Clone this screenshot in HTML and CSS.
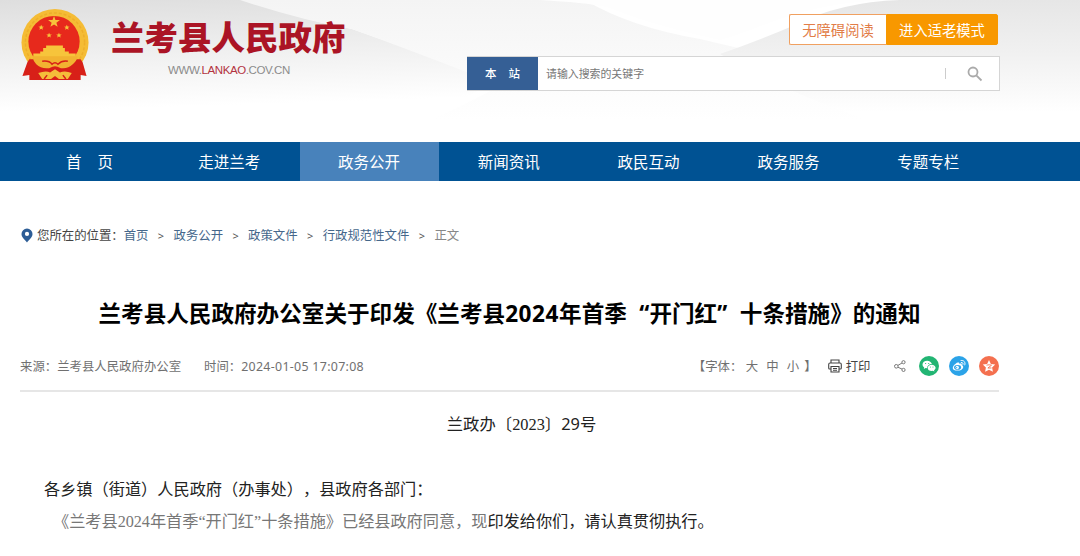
FILE: index.html
```
<!DOCTYPE html>
<html lang="zh-CN">
<head>
<meta charset="utf-8">
<title>兰考县人民政府</title>
<link rel="stylesheet" href="styles.css">
</head>
<body>
<header class="header">
  <svg class="header-bg" viewBox="0 0 1080 142" preserveAspectRatio="none" aria-hidden="true">
    <defs>
      <linearGradient id="left" x1="0" y1="0" x2=".12" y2="1"><stop offset="0" stop-color="#dedede"/><stop offset=".45" stop-color="#f0f0f0"/><stop offset=".85" stop-color="#fff"/></linearGradient>
      <linearGradient id="fold" x1="0" y1="0" x2="0" y2="1"><stop offset="0" stop-color="#f4f4f4"/><stop offset="1" stop-color="#fff"/></linearGradient>
      <linearGradient id="right" x1="0" y1="0" x2="0" y2="1"><stop offset="0" stop-color="#e6e6e6"/><stop offset=".4" stop-color="#f0f0f0"/><stop offset=".9" stop-color="#fff"/></linearGradient>
    </defs>
    <path d="M0 0H250Q300 20 352 29Q420 53 500 80L400 130H0Z" fill="url(#left)"/>
    <path d="M240 0H585Q630 27 700 39Q780 58 880 80V120H430Q480 98 500 85Q410 50 352 29Q300 20 240 0Z" fill="url(#fold)"/>
    <path d="M540 0C570 2 590 3 610 8C650 24 685 32 720 40C760 30 800 2 890 0Z" fill="#fefefe"/>
    <path d="M720 54Q755 42 795 25Q840 2 900 0H1080V125H880Q780 90 720 54Z" fill="url(#right)"/>
  </svg>
  <div class="wrap header-row">
    <div class="brand">
      <svg class="emblem" viewBox="0 0 70 74" aria-hidden="true">
        <circle cx="35" cy="35" r="34" fill="#f5bc35"/>
        <circle cx="35" cy="35" r="30" fill="none" stroke="#eeae2a" stroke-width="1.500" stroke-dasharray="3 2"/>
        <circle cx="34" cy="34" r="26" fill="#e7291c"/>
        <g fill="#f7c43b">
          <path d="M34 8l1.500 4.100 4.500.1-3.600 2.700 1.300 4.200-3.700-2.500-3.700 2.500 1.300-4.200-3.600-2.700 4.500-.1z"/>
          <path d="M21 17l.8 1.800 2 .1-1.600 1.200.6 1.900-1.800-1-1.800 1 .6-1.900-1.600-1.200 2-.1zM47 17l.8 1.800 2 .1-1.600 1.200.6 1.900-1.800-1-1.800 1 .6-1.900-1.600-1.200 2-.1zM29 25l.8 1.800 2 .1-1.600 1.200.6 1.900-1.800-1-1.800 1 .6-1.900-1.600-1.200 2-.1zM39 25l.8 1.800 2 .1-1.600 1.200.6 1.900-1.800-1-1.800 1 .6-1.900-1.600-1.200 2-.1z"/>
          <path d="M26 38h17v2.500h2V44H23v-3.500h3zM20 44h29v2H20zM13 46h43v5H13z"/>
        </g>
        <path d="M9 52h52l2 3 4 14-6-1v5H9v-5l-7 1 5-14z" fill="#d82018"/>
        <path d="M12 49H58Q57 54 53 57Q48 62 41 61Q37 59 35 59Q33 59 29 61Q21 62 16 57Q13 54 12 49Z" fill="#f2b331"/>
        <path d="M22 54Q29 53 32 57Q35 54 38 57Q42 53 48 54" fill="none" stroke="#d82018" stroke-width="1.500"/>
        <path d="M18 66q8-3 12-.5l5-3.500 5 3.500q5-2.500 12 .5l-4 6h-9l-4-3-4 3h-9z" fill="#f4bd3a"/>
        <path d="M27 68l-3 4M43 68l3 4" stroke="#d82018" stroke-width="1.500"/>
      </svg>
      <div class="brand-text">
        <div class="brand-name">兰考县人民政府</div>
        <div class="brand-url">WWW.<span class="brand-url-key">LANKAO</span>.COV.CN</div>
      </div>
    </div>
    <div class="tools">
      <div class="modes"><a class="mode mode-plain">无障碍阅读</a><a class="mode mode-fill">进入适老模式</a></div>
      <div class="search">
        <div class="search-scope"><span>本</span><span>站</span></div>
        <div class="search-field">请输入搜索的关键字</div>
        <div class="search-button">
          <svg width="16" height="16" viewBox="0 0 16 16" fill="none" stroke="#aaa" stroke-width="1.800"><circle cx="6" cy="6" r="4.500"/><path d="M9.300 9.300L14.500 14.500"/></svg>
        </div>
      </div>
    </div>
  </div>
</header>
<nav class="nav">
  <div class="wrap nav-row">
    <a class="nav-item nav-home"><span>首</span><span>页</span></a>
    <a class="nav-item">走进兰考</a>
    <a class="nav-item nav-active">政务公开</a>
    <a class="nav-item">新闻资讯</a>
    <a class="nav-item">政民互动</a>
    <a class="nav-item">政务服务</a>
    <a class="nav-item">专题专栏</a>
  </div>
</nav>
<main class="wrap">
  <div class="crumbs">
    <svg class="pin" width="12" height="15" viewBox="0 0 12 15"><path fill-rule="evenodd" d="M6 .5a5.500 5.500 0 0 0-5.500 5.600C.5 9.500 3.500 11.500 6 14.500c2.500-3 5.500-5 5.500-8.400A5.500 5.500 0 0 0 6 .5zm0 3.300a2.100 2.100 0 1 1 0 4.200 2.100 2.100 0 0 1 0-4.200z" fill="#2d5d96"/></svg>
    <span class="crumb-label">您所在的位置：</span><a>首页</a><i>&gt;</i><a>政务公开</a><i>&gt;</i><a>政策文件</a><i>&gt;</i><a>行政规范性文件</a><i>&gt;</i><span class="crumb-current">正文</span>
  </div>
  <h1 class="title">兰考县人民政府办公室关于印发《兰考县<span class="title-year">2024</span>年首季<span class="quote quote-open">“</span>开门红<span class="quote">”</span>十条措施》的通知</h1>
  <div class="meta">
    <span class="source">来源：兰考县人民政府办公室</span>
    <span>时间：<span class="date">2024-01-05 17:07:08</span></span>
    <div class="actions">
      <span class="sizes"><span class="sizes-label">【字体：</span><a>大</a><a>中</a><a>小</a><span class="sizes-end">】</span></span>
      <span class="print"><svg width="14" height="14" viewBox="0 0 14 14" fill="none" stroke="#444" stroke-width="1.100"><path d="M3 4V1h8v3M3 10H1.500Q.7 10 .7 9V5.500Q.7 4 2 4h10q1.300 0 1.300 1.500V9q0 1-.8 1H11M3 7.500h8V13H3zM5 9.500h4M5 11.300h4"/></svg>打印</span>
      <svg class="share" width="12" height="12" viewBox="0 0 12 12" fill="none" stroke="#777"><circle cx="2.300" cy="6.300" r="1.800"/><circle cx="9.500" cy="2.200" r="1.600"/><circle cx="9.500" cy="9.900" r="1.600"/><path d="M3.900 5.400L8 3M3.900 7.200L8 9.100"/></svg>
      <svg class="social" viewBox="0 0 20 20"><circle cx="10" cy="10" r="10" fill="#22b573"/><path d="M8.200 4.800c-2.700 0-4.700 1.700-4.700 3.700 0 1.200.7 2.200 1.700 2.900l-.4 1.600 1.800-.9 1.500.2c0-2.600 2.200-4.300 4.800-4.200-.6-2-2.400-3.300-4.700-3.300z" fill="#fff"/><path d="M12.700 8.700c-2.300 0-4 1.400-4 3.200s1.700 3.100 4 3.100l1.200-.2 1.500.8-.4-1.400c1-.6 1.600-1.400 1.600-2.400 0-1.700-1.700-3.100-3.900-3.100z" fill="#fff"/><g fill="#22b573"><circle cx="6.600" cy="7.500" r=".6"/><circle cx="9.700" cy="7.500" r=".6"/><circle cx="11.400" cy="11" r=".5"/><circle cx="14" cy="11" r=".5"/></g></svg>
      <svg class="social" viewBox="0 0 20 20"><circle cx="10" cy="10" r="10" fill="#2ba3e8"/><path d="M8.800 6.600c.8-.4 1.700-.1 1.400 1.100 1.500-.6 3-.4 2.500 1.200 3 1 1.600 5.600-4 5.700-6.300.1-6.100-4-2-6.900.8-.6 1.500-1 2.100-1.100z" fill="#fff"/><ellipse cx="8.600" cy="11.400" rx="3.500" ry="2.300" fill="#2ba3e8"/><circle cx="8.200" cy="11.500" r="1.700" fill="#fff"/><circle cx="7.700" cy="11.700" r=".6" fill="#2ba3e8"/><path d="M12 4.500c3-.5 4.700 1.800 3.800 4.400M12.300 6.500c1.400-.2 2.100.7 1.700 1.900" fill="none" stroke="#fff" stroke-linecap="round"/></svg>
      <svg class="social" viewBox="0 0 20 20"><circle cx="10" cy="10" r="10" fill="#f4704f"/><path d="M10 4l1.900 3.900 4.300.6-3.100 3 .8 4.300-3.900-2-3.900 2 .8-4.300-3.100-3 4.300-.6z" fill="#fff"/><path d="M7.500 9.200c2-.5 3.500-.5 5 0L8.900 12h3.600" fill="none" stroke="#f4704f" stroke-width=".9"/></svg>
    </div>
  </div>
  <article class="article">
    <p class="number">兰政办<span class="serif">〔2023〕</span>29号</p>
    <p class="recipient">各乡镇（街道）人民政府（办事处），县政府各部门：</p>
    <p class="content"><span class="faded">《兰考县<span class="serif">2024</span>年首季<span class="serif">“</span>开门红<span class="serif">”</span>十条措施》已经县政府同意，现</span>印发给你们，请认真贯彻执行。</p>
  </article>
</main>
</body>
</html>
```
FILE: styles.css
```
* { box-sizing: border-box; }
body {
  margin: 0;
  height: 556px;
  overflow: hidden;
  background: #fff;
  color: #222;
  font-family: "Noto Sans", "Noto Sans CJK SC", sans-serif;
  text-spacing-trim: space-all;
}
h1, p { margin: 0; }
.wrap { width: 979px; margin-left: 20px; }

.header { position: relative; height: 142px; }
.header-bg { position: absolute; inset: 0; width: 100%; height: 100%; }
.header-row { position: relative; display: flex; justify-content: space-between; }
.brand { display: flex; padding-top: 8px; }
.emblem { width: 70px; height: 73px; }
.brand-text { padding: 7px 0 0 21px; width: 260px; }
.brand-name {
  font: 900 33.500px/42px "Noto Sans CJK SC", sans-serif;
  color: #ab1425;
  white-space: nowrap;
}
.brand-url {
  padding: 5px 0 0 57px;
  font: 11.500px/16px "Liberation Sans", sans-serif;
  letter-spacing: -.4px;
  color: #8b8b8b;
  white-space: nowrap;
}
.brand-url-key { color: #b33340; }

.tools { padding-top: 14px; width: 533px; margin-right: -1px; }
.modes { display: flex; justify-content: flex-end; margin-right: 2px; }
.mode {
  height: 31px;
  border: 1px solid #f0a060;
  font-size: 14.300px;
  line-height: 31px;
  text-align: center;
}
.mode-plain { width: 97px; background: #fff; color: #e27d48; border-right: 0; border-radius: 2px 0 0 2px; }
.mode-fill { width: 112px; background: #f89800; border-color: #f89800; color: #fff; border-radius: 0 2px 2px 0; }
.search { display: flex; height: 35px; margin-top: 11px; border: 1px solid #d5d5d5; background: #fff; }
.search-scope {
  display: flex;
  justify-content: center;
  gap: 12px;
  width: 71px;
  margin-left: -1px;
  background: #355f95;
  color: #fff;
  font-size: 11.500px;
  font-weight: 500;
  line-height: 34px;
}
.search-field { flex: 1; padding-left: 8px; color: #777; font-size: 10.900px; line-height: 33px; }
.search-button { display: flex; align-items: center; justify-content: center; width: 54px; }
.search-button::before { content: ""; width: 1px; height: 11px; margin-right: 21px; background: #ccc; }
.search-button svg { margin-right: 16px; }

.nav { height: 39px; background: #005293; }
.nav-row { display: flex; }
.nav-item { width: 139.800px; padding-right: 1px; color: #fff; font-size: 15.500px; line-height: 40px; height: 39px; text-align: center; }
.nav-home { display: flex; justify-content: center; gap: 16px; }
.nav-active { background: #4882bb; }

.crumbs { display: flex; align-items: center; height: 20px; margin-top: 44px; font-size: 12.400px; white-space: nowrap; color: #45678b; }
.crumbs .pin { margin: 0 4px 0 1px; }
.crumbs i { width: 25px; text-align: center; font-style: normal; font-size: 11px; color: #555; }
.crumb-label { color: #444; }
.crumb-current { color: #888; }

.title {
  margin-top: 51px;
  font-size: 22.600px;
  line-height: 36px;
  font-weight: 700;
  text-align: center;
  white-space: nowrap;
  color: #000;
}
.title-year { letter-spacing: .55px; }
.quote { display: inline-block; width: 22.600px; text-align: left; }
.quote-open { text-align: right; }

.meta {
  display: flex;
  align-items: center;
  height: 60px;
  padding-top: 9px;
  border-bottom: 2px solid #e6e6e6;
  color: #707070;
  font-size: 12.400px;
  white-space: nowrap;
}
.source { width: 184px; }
.date { letter-spacing: .3px; }
.actions { display: flex; align-items: center; margin-left: auto; margin-right: .5px; }
.sizes { display: flex; }
.sizes-label { width: 53px; }
.sizes a { width: 20.500px; }
.sizes-end { margin-left: -3px; }
.print { display: flex; align-items: center; gap: 4px; margin-left: 11px; color: #444; }
.share { margin-left: 23px; }
.social { width: 20px; height: 20px; margin-left: 10px; }
.share + .social { margin-left: 13px; }

.article { font-size: 16.200px; line-height: 32px; white-space: nowrap; }
.number { padding-top: 16px; padding-left: 24px; text-align: center; font-size: 16.350px; }
.recipient { padding: 32px 0 0 24px; }
.content { padding-left: 33px; letter-spacing: -.03px; }
.serif { font-family: "Liberation Serif", "Noto Sans CJK SC", serif; }
.faded { color: #777; }
```
